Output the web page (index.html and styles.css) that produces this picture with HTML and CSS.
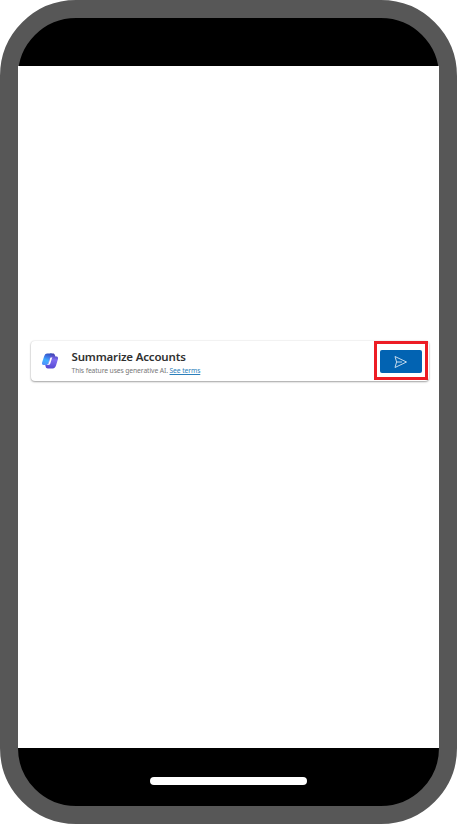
FILE: index.html
```html
<!DOCTYPE html>
<html lang="en">
<head>
<meta charset="utf-8">
<title>Summarize Accounts</title>
<link rel="stylesheet" href="styles.css">
</head>
<body>
<div class="phone">
  <div class="status-bar"></div>
  <main class="screen">
    <section class="card">
      <svg class="logo" viewBox="0 0 16 16" aria-hidden="true">
        <defs>
          <linearGradient id="left" x1=".6" y1="0" x2=".35" y2="1">
            <stop offset="0" stop-color="#3450bd"/>
            <stop offset=".3" stop-color="#3f78e8"/>
            <stop offset=".6" stop-color="#3fb0ff"/>
            <stop offset="1" stop-color="#5490fa"/>
          </linearGradient>
          <linearGradient id="right" x1=".5" y1="0" x2=".4" y2="1">
            <stop offset="0" stop-color="#3b3fae"/>
            <stop offset=".4" stop-color="#7f6cf0"/>
            <stop offset="1" stop-color="#5548d2"/>
          </linearGradient>
        </defs>
        <path fill="url(#right)" d="M8 .4h3c1.100 0 1.600.6 1.900 1.600l.5 1.500h.8c1.600 0 2.200 1.200 1.700 2.800l-1.800 6c-.6 2-1.500 3.200-3.400 3.200H5.800c-1.300 0-1.800-.7-2.100-1.700L3.200 12H6z"/>
        <path fill="url(#left)" d="M5.300.4h5.200c-1.200.2-1.700 1.200-2 2.300L6.400 10c-.4 1.400-1 2.100-2.300 2.100H2C.3 12.100-.3 11 .1 9.500L2 3.700C2.700 1.600 3.500.4 5.300.4z"/>
        <path fill="#fff" d="M8.700 4.600h1.900c-.5.300-.7.800-.9 1.400L8.400 10.300c-.4 1.200-.9 1.700-2 1.700h-.8c.6-.4.900-1 1.100-1.700L8 6c.2-.6.300-1.100.7-1.400z"/>
      </svg>
      <div class="copy">
        <h1 class="title">Summarize Accounts</h1>
        <p class="note">This feature uses generative AI. <a class="terms" href="#">See terms</a></p>
      </div>
      <div class="highlight">
        <button class="send" type="button" aria-label="Send">
          <svg class="send-icon" viewBox="0 0 13 12" aria-hidden="true">
            <path d="M1 .5 12.500 6 1 11.500 2.600 6zM2.600 6H8"/>
          </svg>
        </button>
      </div>
    </section>
  </main>
  <div class="home-bar"><div class="home-indicator"></div></div>
</div>
</body>
</html>
```
FILE: styles.css
```css
* {
  box-sizing: border-box;
}

body {
  margin: 0;
  background: #fff;
  font-family: "Noto Sans", "Open Sans", sans-serif;
}

.phone {
  display: flex;
  flex-direction: column;
  width: 457px;
  height: 824px;
  border: 18px solid #575757;
  border-radius: 76px;
  background: #000;
}

.status-bar {
  flex: 0 0 48px;
}

.screen {
  flex: 1;
  padding: 275px 10px 0 12.5px;
  background: #fff;
}

.card {
  display: flex;
  height: 40px;
  padding-right: 1px;
  border-radius: 4px;
  background: #fff;
  box-shadow: 0 1px 2px rgba(0, 0, 0, .34), 0 0 2px rgba(0, 0, 0, .14);
}

.logo {
  width: 16px;
  height: 16px;
  margin: 12px 13.5px 0 11.5px;
}

.copy {
  flex: 1;
  white-space: nowrap;
}

.title {
  margin: 8px 0 0;
  color: #303030;
  font-size: 11.5px;
  font-weight: 600;
  line-height: 16px;
  letter-spacing: -.18px;
}

.note {
  margin: 1px 0 0;
  color: #777;
  font-size: 6.75px;
  line-height: 9px;
  letter-spacing: -.1px;
}

.terms {
  color: #2b7fbb;
  text-decoration: underline;
}

.highlight {
  display: flex;
  width: 54px;
  height: 39px;
  padding: 6px 3px 4px 2.5px;
  border: 3px solid #ed1c24;
}

.send {
  display: flex;
  align-items: center;
  justify-content: center;
  width: 42.5px;
  height: 23px;
  padding: 0;
  border: 0;
  border-radius: 2px;
  background: #0263b2;
}

.send-icon {
  width: 13px;
  height: 12px;
  fill: none;
  stroke: #c5dbed;
  stroke-width: 1;
  stroke-linejoin: round;
}

.home-bar {
  display: flex;
  flex: 0 0 58px;
  justify-content: center;
  padding-top: 29px;
}

.home-indicator {
  width: 157px;
  height: 8px;
  border-radius: 4px;
  background: #fff;
}
```
